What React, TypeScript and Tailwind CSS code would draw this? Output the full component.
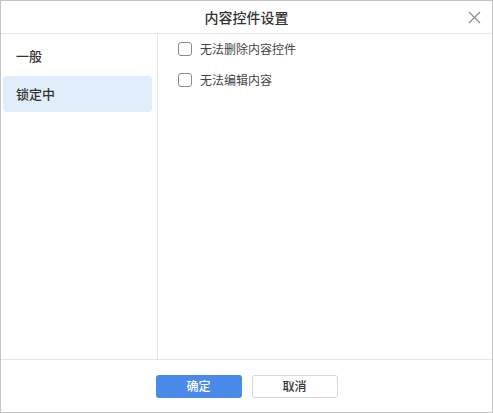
export default function App() {
  return (
    <div
      className="flex h-[413px] w-[493px] flex-col border border-[#c4c4c4] bg-white text-[#333]"
      style={{ fontFamily: '"Noto Sans CJK SC", "Noto Sans", sans-serif' }}
    >
      <header className="relative flex h-[33px] shrink-0 items-center justify-center border-b border-[#e6e6e6]">
        <span className="text-[14px] font-medium text-[#333]">内容控件设置</span>
        <button type="button" className="absolute right-[11px] top-[10px] text-[#8c8c8c]">
          <svg width="13" height="13" viewBox="0 0 13 13" fill="none" stroke="currentColor" strokeWidth="1.2">
            <path d="M1 1l11 11M12 1L1 12" />
          </svg>
        </button>
      </header>
      <div className="flex min-h-0 flex-1">
        <aside className="flex w-[157px] shrink-0 flex-col gap-[2px] border-r border-[#e6e6e6] pl-[2px] pr-[5px] pt-[4px]">
          <div className="flex h-[36px] items-center rounded px-[13px] text-[13px] font-medium">一般</div>
          <div className="flex h-[36px] items-center rounded bg-[#e0edfb] px-[13px] text-[13px] font-medium">
            锁定中
          </div>
        </aside>
        <main className="flex flex-col gap-[13px] pl-[20px] pt-[6px]">
          {["无法删除内容控件", "无法编辑内容"].map((label) => (
            <label key={label} className="flex items-center gap-[8px] text-[12px] text-[#444]">
              <span className="h-[14px] w-[14px] rounded-[3px] border border-[#8a8a8a] bg-white" />
              {label}
            </label>
          ))}
        </main>
      </div>
      <footer className="flex h-[53px] shrink-0 items-center justify-center gap-[10px] border-t border-[#e6e6e6]">
        <button
          type="button"
          className="h-[23px] w-[86px] rounded-[3px] bg-[#4a8ae8] text-[12px] font-medium text-white"
        >
          确定
        </button>
        <button
          type="button"
          className="h-[23px] w-[86px] rounded-[3px] border border-[#d6d6d6] bg-white text-[12px] font-medium text-[#333]"
        >
          取消
        </button>
      </footer>
    </div>
  );
}
